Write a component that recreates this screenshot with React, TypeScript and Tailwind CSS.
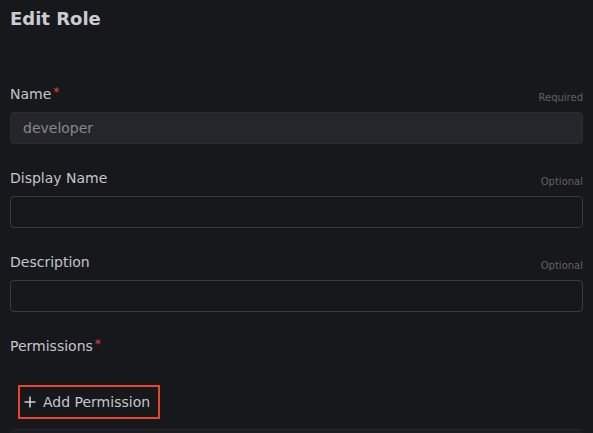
import React from "react";

interface FieldProps {
  label: string;
  hint: string;
  required?: boolean;
  value?: string;
  filled?: boolean;
}

const Asterisk = () => (
  <span className="ml-[2px] align-top text-[12px] leading-[16px] text-[#d9453f]">*</span>
);

const Field = ({ label, hint, required, value, filled }: FieldProps) => {
  return (
    <div className="flex flex-col">
      <div className="flex items-end justify-between h-[20px] leading-[20px]">
        <span className="text-[14px] text-[#c3c6cb]">
          {label}
          {required && <Asterisk />}
        </span>
        <span className="text-[10px] leading-[13px] text-[#5f6268]">{hint}</span>
      </div>
      <div
        className={
          filled
            ? "mt-[8px] h-[32px] rounded-[4px] border border-[#2c2d32] bg-[#25262b] pl-[12px] flex items-center"
            : "mt-[8px] h-[32px] rounded-[4px] border border-[#3a3b41] bg-[#17181c] pl-[12px] flex items-center"
        }
      >
        {value && <span className="text-[14px] text-[#85888e]">{value}</span>}
      </div>
    </div>
  );
};

export default function App() {
  return (
    <div className="h-screen overflow-hidden bg-[#17181c] px-[10px] pt-[7px] font-['DejaVu_Sans',sans-serif]">
      <h1 className="text-[18px] leading-[24px] font-bold text-[#c9ccd1]">Edit Role</h1>

      <div className="mt-[53px] flex flex-col gap-[24px]">
        <Field label="Name" hint="Required" required value="developer" filled />
        <Field label="Display Name" hint="Optional" />
        <Field label="Description" hint="Optional" />
      </div>

      {/* Permissions */}
      <div className="mt-[24px] h-[20px] leading-[20px] text-[14px] text-[#c3c6cb]">
        Permissions
        <Asterisk />
      </div>

      <button className="mt-[29px] ml-[8px] flex h-[34px] w-[142px] items-center gap-[7px] border-2 border-[#e8452c] pl-[4px] text-[14px] text-[#c3c6cb]">
        <svg width="12" height="12" viewBox="0 0 12 12" fill="none" stroke="#c9ccd1" strokeWidth="1.6">
          <path d="M6 0.5v11M0.5 6h11" />
        </svg>
        <span>Add Permission</span>
      </button>

      <div className="mt-[10px] h-[20px] rounded-t-[4px] border-t border-[#26272c] bg-[#1c1d22]" />
    </div>
  );
}
